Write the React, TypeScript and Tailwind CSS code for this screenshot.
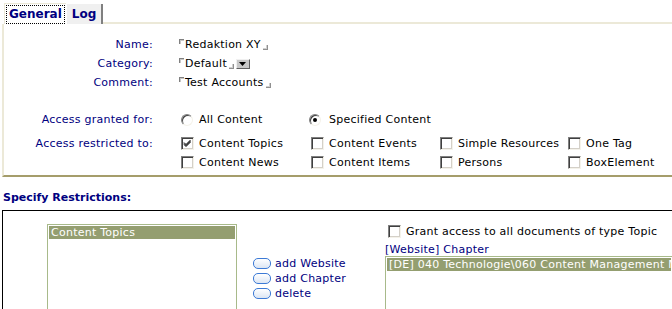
import React from 'react';

const font = "font-['DejaVu_Sans',Verdana,sans-serif]";

function Check({ checked = false }: { checked?: boolean }) {
  return (
    <span className="relative inline-block h-[13px] w-[13px] shrink-0 border border-t-[#808080] border-l-[#808080] border-b-[#f4f2ea] border-r-[#f4f2ea] bg-white shadow-[inset_1px_1px_0_#404040,inset_-1px_-1px_0_#d4d0c8]">
      {checked && (
        <svg className="absolute left-[1px] top-[1px]" width="9" height="9" viewBox="0 0 9 9">
          <path d="M1 3.5 L3 5.5 L7.5 1 M1 4.5 L3 6.5 L7.5 2 M1 5.5 L3 7.5 L7.5 3" stroke="#000" strokeWidth="1" fill="none" />
        </svg>
      )}
    </span>
  );
}

function Radio({ checked = false }: { checked?: boolean }) {
  return (
    <span className="relative inline-flex h-[12px] w-[12px] shrink-0 items-center justify-center rounded-full border border-t-[#808080] border-l-[#808080] border-b-[#f4f2ea] border-r-[#f4f2ea] bg-white shadow-[inset_1px_1px_0_#404040]">
      {checked && <span className="h-[4px] w-[4px] rounded-full bg-black" />}
    </span>
  );
}

function Field({ text, select = false }: { text: string; select?: boolean }) {
  return (
    <span className="flex items-center">
      <span className="mb-[6px] mr-[1px] h-[5px] w-[5px] border-l border-t border-[#808080] shadow-[inset_1px_1px_0_#c8c8c8]" />
      <span>{text}</span>
      <span className="mt-[6px] ml-[2px] h-[5px] w-[5px] border-b border-r border-[#909090] shadow-[inset_-1px_-1px_0_#d0d0d0]" />
      {select && (
        <span className="ml-[2px] flex h-[10px] w-[14px] items-center justify-center border border-t-[#f0f0f0] border-l-[#f0f0f0] border-b-[#606060] border-r-[#606060] bg-[#c8c8c8]">
          <svg width="7" height="4" viewBox="0 0 7 4">
            <path d="M0 0 H7 L3.5 4 Z" fill="#000" />
          </svg>
        </span>
      )}
    </span>
  );
}

function Pill({ label }: { label: string }) {
  return (
    <div className="flex h-[15px] items-center whitespace-nowrap">
      <span className="h-[11px] w-[18px] shrink-0 rounded-[5px] border border-[#3c7ad6] bg-gradient-to-b from-[#ffffff] to-[#dce6f4]" />
      <span className="ml-[4px] text-[#000080]">{label}</span>
    </div>
  );
}

const labels = ['Name:', 'Category:', 'Comment:'];

export default function App() {
  return (
    <div className={`${font} h-[309px] w-[672px] overflow-hidden bg-white text-[11px] leading-[13px] tracking-[0.25px] text-black`}>
      {/* Tabs */}
      <div className="flex h-[24px] items-end pl-[4px] tracking-normal">
        <div className="flex h-[21px] items-center border-l border-t border-[#ece9d8] bg-white p-[1px]">
          <span className="flex h-[19px] items-center border border-dotted border-black px-[2px] text-[12px] font-bold leading-[13px] text-[#000080]">General</span>
        </div>
        <div className="flex h-[20px] items-center border-l border-white border-r-2 border-r-[#808080] bg-[#f0f0f0] px-[5px] text-[12px] font-bold text-[#000080]">
          Log
        </div>
        <div className="h-[2px] flex-1 bg-[#ece9d8]" />
      </div>

      {/* General panel */}
      <div className="ml-[2px] border-b-2 border-l-2 border-b-[#a59d6b] border-l-[#ece9d8] pb-[3px] pt-[11px]">
        {labels.map((l, i) => (
          <div key={l} className="flex h-[19px] items-center">
            <span className="w-[149px] text-right text-[#000080]">{l}</span>
            <span className="ml-[26px]">
              <Field text={['Redaktion XY', 'Default', 'Test Accounts'][i]} select={i === 1} />
            </span>
          </div>
        ))}

        <div className="mt-[18px] flex h-[19px] items-center">
          <span className="w-[149px] text-right text-[#000080]">Access granted for:</span>
          <div className="ml-[28px] flex">
            <div className="flex w-[128px] items-center gap-[6px]">
              <Radio />
              <span>All Content</span>
            </div>
            <div className="flex items-center gap-[8px]">
              <Radio checked />
              <span>Specified Content</span>
            </div>
          </div>
        </div>

        <div className="mt-[5px] flex">
          <span className="flex h-[19px] w-[149px] items-center justify-end text-[#000080]">Access restricted to:</span>
          <div className="ml-[28px] grid grid-cols-[130px_129px_128px_100px]">
            {[
              ['Content Topics', true],
              ['Content Events', false],
              ['Simple Resources', false],
              ['One Tag', false],
              ['Content News', false],
              ['Content Items', false],
              ['Persons', false],
              ['BoxElement', false],
            ].map(([t, c]) => (
              <div key={t as string} className="flex h-[19px] items-center gap-[5px]">
                <Check checked={c as boolean} />
                <span className="whitespace-nowrap">{t as string}</span>
              </div>
            ))}
          </div>
        </div>
      </div>

      {/* Restrictions */}
      <div className="mt-[14px] pl-[3px] text-[11px] font-bold leading-[13px] tracking-normal text-[#000080]">Specify Restrictions:</div>

      <div className="ml-[2px] mt-[6px] flex h-[120px] border-l border-t border-black pt-[13px]">
        <div className="ml-[44px] h-[100px] w-[190px] shrink-0 border border-[#a8ba8a] p-[1px]">
          <div className="h-[13px] bg-[#949e70] pl-[2px] leading-[13px] text-white">Content Topics</div>
        </div>

        <div className="ml-[16px] mt-[32px] flex shrink-0 flex-col">
          <Pill label="add Website" />
          <Pill label="add Chapter" />
          <Pill label="delete" />
        </div>

        <div className="ml-[39px] flex min-w-0 flex-1 flex-col">
          <div className="ml-[3px] mt-[1px] flex h-[13px] items-center gap-[5px]">
            <Check />
            <span className="whitespace-nowrap">Grant access to all documents of type Topic</span>
          </div>
          <div className="mt-[5px] whitespace-nowrap text-[#000080]">[Website] Chapter</div>
          <div className="h-[60px] border-l border-t border-[#a8ba8a] p-[1px]">
            <div className="h-[13px] overflow-hidden whitespace-nowrap bg-[#949e70] pl-[2px] text-white">
              [DE] 040 Technologie\060 Content Management Module
            </div>
          </div>
        </div>
      </div>
    </div>
  );
}
